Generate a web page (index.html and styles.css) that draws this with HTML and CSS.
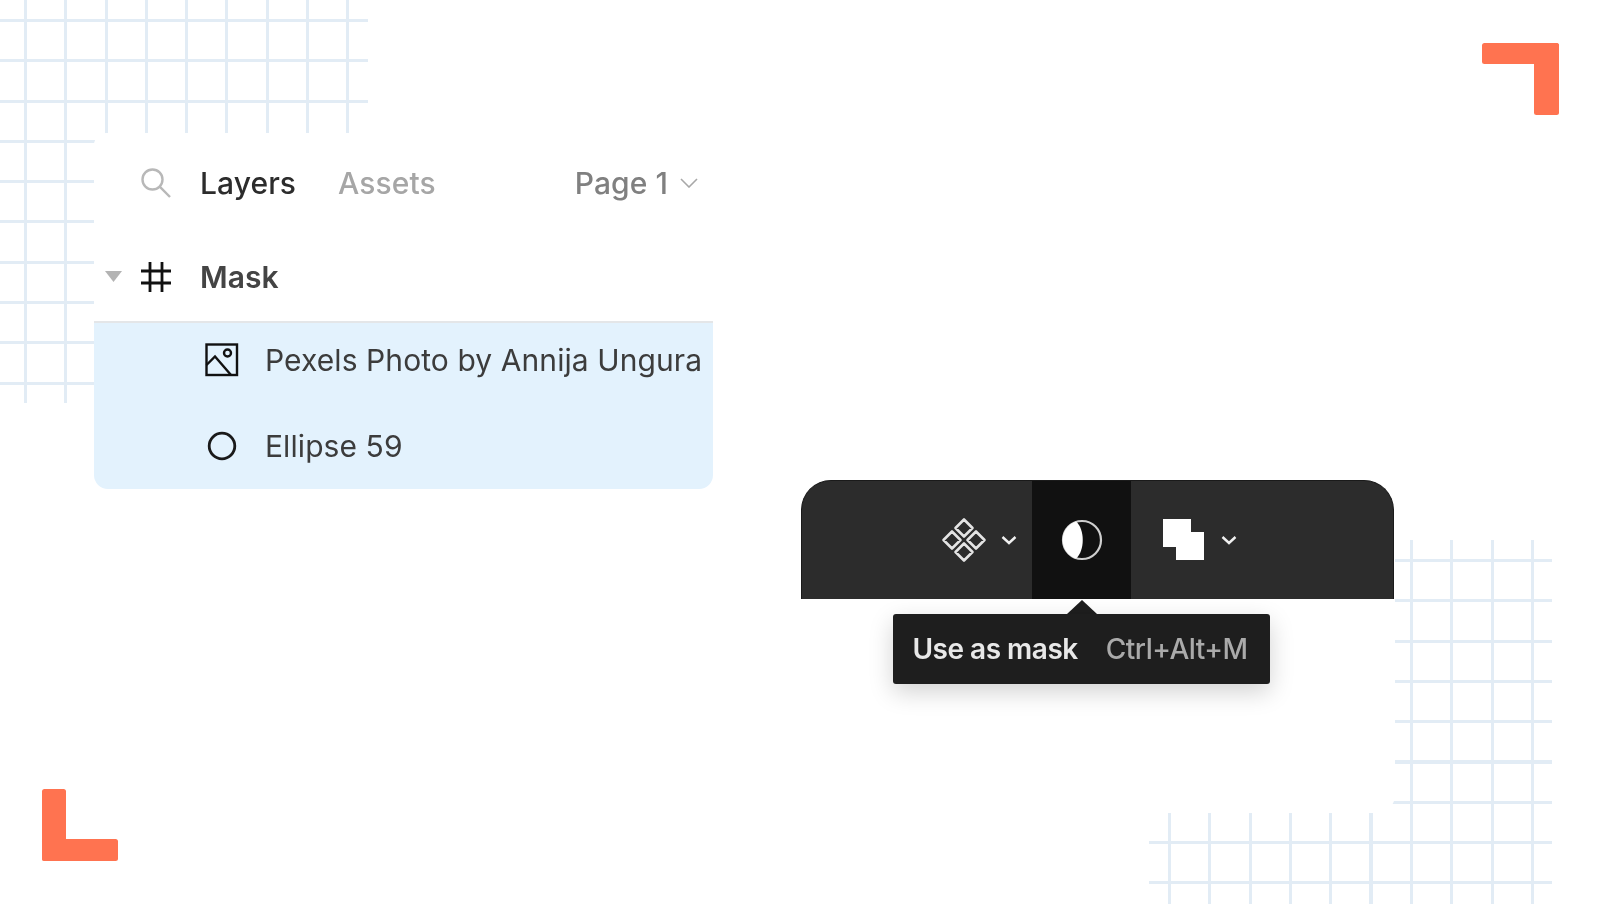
FILE: index.html
```html
<!DOCTYPE html>
<html lang="en">
<head>
<meta charset="utf-8">
<title>Use as mask</title>
<link rel="stylesheet" href="styles.css">
</head>
<body>
<main class="stage">
  <div class="grid-h grid-tl-h"></div>
  <div class="grid-v grid-tl-v"></div>
  <div class="grid-h grid-br-h"></div>
  <div class="grid-v grid-br-v"></div>
  <div class="grid-v grid-br-v2"></div>
  <div class="br-mask"></div>

  <div class="corner corner-tr"></div>
  <div class="corner corner-bl"></div>

  <section class="panel">
    <header class="tabs">
      <svg class="ic-search" width="32" height="32" viewBox="0 0 32 32" fill="none" stroke="#b8b8b8" stroke-width="2.400"><circle cx="12.500" cy="12.500" r="10"/><path d="M19.700 19.700 30 30"/></svg>
      <span class="tab tab-active">Layers</span>
      <span class="tab tab-muted">Assets</span>
      <span class="page">Page 1
        <svg class="ic-page" width="18" height="10" viewBox="0 0 18 10" fill="none" stroke="#a8a8a8" stroke-width="1.600"><path d="M1 1l8 8 8-8"/></svg>
      </span>
    </header>
    <div class="frame-row">
      <svg class="ic-tri" width="17" height="11" viewBox="0 0 17 11"><path d="M0 0h17l-8.500 11z" fill="#b3b3b3"/></svg>
      <svg class="ic-hash" width="32" height="32" viewBox="0 0 32 32" fill="none" stroke="#111" stroke-width="2.800"><path d="M10 1v30M22 1v30M1 10h30M1 22h30"/></svg>
      <span class="frame-name">Mask</span>
    </div>
    <div class="selection">
      <div class="layer">
        <svg class="ic-image" width="34" height="34" viewBox="0 0 34 34" fill="none" stroke="#111" stroke-width="2.400"><rect x="1.500" y="1.500" width="30.500" height="30.500"/><path d="M1.500 22 10 13.500 26 32"/><circle cx="22.500" cy="10" r="3.500"/></svg>
        <span class="layer-name">Pexels Photo by Annija Ungura</span>
      </div>
      <div class="layer">
        <svg class="ic-ellipse" width="34" height="34" viewBox="0 0 34 34" fill="none" stroke="#1a1a1a" stroke-width="2.800"><circle cx="17" cy="17" r="12.800"/></svg>
        <span class="layer-name">Ellipse 59</span>
      </div>
    </div>
  </section>

  <section class="tool">
    <div class="toolbar">
      <div class="tool-group tool-left">
        <svg width="46" height="46" viewBox="0 0 46 46" fill="none" stroke="#e4e4e4" stroke-width="2.600" stroke-linejoin="round"><path d="M23 2.500 31.500 11 23 19.500 14.500 11zM23 26.500 31.500 35 23 43.500 14.500 35zM11 14.500 19.500 23 11 31.500 2.500 23zM35 14.500 43.500 23 35 31.500 26.500 23z"/></svg>
        <svg class="chev" width="16" height="10" viewBox="0 0 16 10" fill="none" stroke="#f0f0f0" stroke-width="2.400"><path d="M1.500 2 8 8 14.500 2"/></svg>
      </div>
      <div class="tool-active">
        <svg width="42" height="42" viewBox="0 0 42 42"><circle cx="21" cy="21" r="19" fill="none" stroke="#cfcfcf" stroke-width="2.200"/><path d="M15 2.500A19.500 19.500 0 0 0 15 39.500C24 32 24 10 15 2.500Z" fill="#fff"/></svg>
      </div>
      <div class="tool-group tool-right">
        <svg width="41" height="41" viewBox="0 0 41 41"><path d="M0 0h28v13h13v28H13V28H0z" fill="#fff"/></svg>
        <svg class="chev" width="16" height="10" viewBox="0 0 16 10" fill="none" stroke="#f0f0f0" stroke-width="2.400"><path d="M1.500 2 8 8 14.500 2"/></svg>
      </div>
    </div>
    <div class="tip-arrow"></div>
    <div class="tooltip">
      <span class="tip-label">Use as mask</span>
      <span class="tip-key">Ctrl+Alt+M</span>
    </div>
  </section>
</main>
</body>
</html>
```
FILE: styles.css
```css
* { box-sizing: border-box; }
html, body { margin: 0; padding: 0; background: #fff; }
.stage {
  position: relative;
  width: 1600px;
  height: 904px;
  overflow: hidden;
  background: #fff;
  font-family: "Inter", "Liberation Sans", sans-serif;
  filter: blur(.5px);
}

/* decorative grids on the free canvas */
.grid-h, .grid-v { position: absolute; }
.grid-h { background: repeating-linear-gradient(180deg, #e2ecf5 0 3px, transparent 3px 40.300px); }
.grid-v { background: repeating-linear-gradient(90deg, #e2ecf5 0 3px, transparent 3px 40.300px); }
.grid-tl-h { left: 0; top: 19px; width: 368px; height: 372px; }
.grid-tl-v { left: 23.500px; top: 0; width: 326px; height: 403px; }
.grid-br-h { left: 1149px; top: 558.500px; width: 403px; height: 346px; }
.grid-br-v { left: 1409.500px; top: 539.500px; width: 124px; height: 365px; }
.grid-br-v2 { left: 1167.500px; top: 813px; width: 205px; height: 91px; }
.br-mask {
  position: absolute;
  left: 1130px;
  top: 530px;
  width: 264.700px;
  height: 283px;
  background: #fff;
  border-bottom-right-radius: 18px;
}

/* orange corners */
.corner { position: absolute; width: 76.500px; height: 72px; }
.corner::before, .corner::after { content: ""; position: absolute; background: #ff7350; border-radius: 2.500px; }
.corner-tr { left: 1482px; top: 42.500px; }
.corner-tr::before { left: 0; top: 0; width: 100%; height: 21px; }
.corner-tr::after { right: 0; top: 0; width: 25px; height: 100%; }
.corner-bl { left: 41.500px; top: 789px; }
.corner-bl::before { left: 0; top: 0; width: 24px; height: 100%; }
.corner-bl::after { left: 0; bottom: 0; width: 100%; height: 22px; }

/* layers panel */
.panel {
  position: absolute;
  left: 94px;
  top: 133px;
  width: 619px;
  height: 356px;
  display: flex;
  flex-direction: column;
  background: #fff;
  border-radius: 12px;
  color: #3c3c3c;
  font-size: 30px;
  letter-spacing: .08px;
}
.tabs {
  height: 100px;
  flex: none;
  display: flex;
  align-items: center;
  padding: 0 15px 0 46px;
}
.ic-search { flex: none; margin-right: 28px; margin-top: -1px; }
.tab { font-weight: 500; }
.tab-active { color: #2c2c2c; margin-right: 42px; }
.tab-muted { color: #a6a6a6; }
.page { margin-left: auto; display: flex; align-items: center; gap: 12px; color: #808080; font-weight: 500; }
.frame-row {
  height: 88px;
  flex: none;
  display: flex;
  align-items: center;
  padding-left: 11px;
  font-weight: 600;
}
.ic-tri { flex: none; margin-right: 18px; margin-top: -1px; }
.ic-hash { flex: none; margin-right: 28px; }
.frame-name { color: #444; }
.selection {
  flex: 1;
  display: flex;
  flex-direction: column;
  gap: 12px;
  background: #e3f2fd;
  border-top: 2px solid #e4e6e8;
  border-radius: 0 0 14px 14px;
}
.layer {
  height: 74px;
  flex: none;
  display: flex;
  align-items: center;
  padding-left: 111px;
  gap: 26px;
  color: #3c3c3c;
  white-space: nowrap;
}

/* dark toolbar with tooltip */
.tool {
  position: absolute;
  left: 801px;
  top: 479.500px;
  width: 593px;
  display: flex;
  flex-direction: column;
  align-items: flex-start;
}
.toolbar {
  width: 100%;
  height: 119px;
  display: flex;
  background: #2c2c2c;
  border: 1px solid #1a1a1a;
  border-bottom: 0;
  border-radius: 30px 30px 0 0;
}
.tool-group { display: flex; align-items: center; flex: none; }
.tool-left { width: 230px; gap: 14px; justify-content: flex-end; padding-right: 15px; }
.tool-right { gap: 17px; padding-left: 32px; }
.tool-active {
  width: 99px;
  flex: none;
  display: flex;
  align-items: center;
  justify-content: center;
  background: #111;
}
.tip-arrow {
  width: 0;
  height: 0;
  margin: 1.500px 0 0 266px;
  border-left: 15px solid transparent;
  border-right: 15px solid transparent;
  border-bottom: 14px solid #1e1e1e;
}
.tooltip {
  width: 377px;
  height: 69.500px;
  margin-left: 91.500px;
  display: flex;
  align-items: center;
  justify-content: space-between;
  padding: 0 22px 0 20px;
  background: #1e1e1e;
  border-radius: 3px;
  box-shadow: 0 8px 24px rgba(0, 0, 0, .18);
  font-size: 28px;
  font-weight: 500;
  letter-spacing: -.5px;
}
.tip-label { color: #e8e8e8; font-weight: 600; }
.tip-key { color: #aaa; font-weight: 500; }
```
